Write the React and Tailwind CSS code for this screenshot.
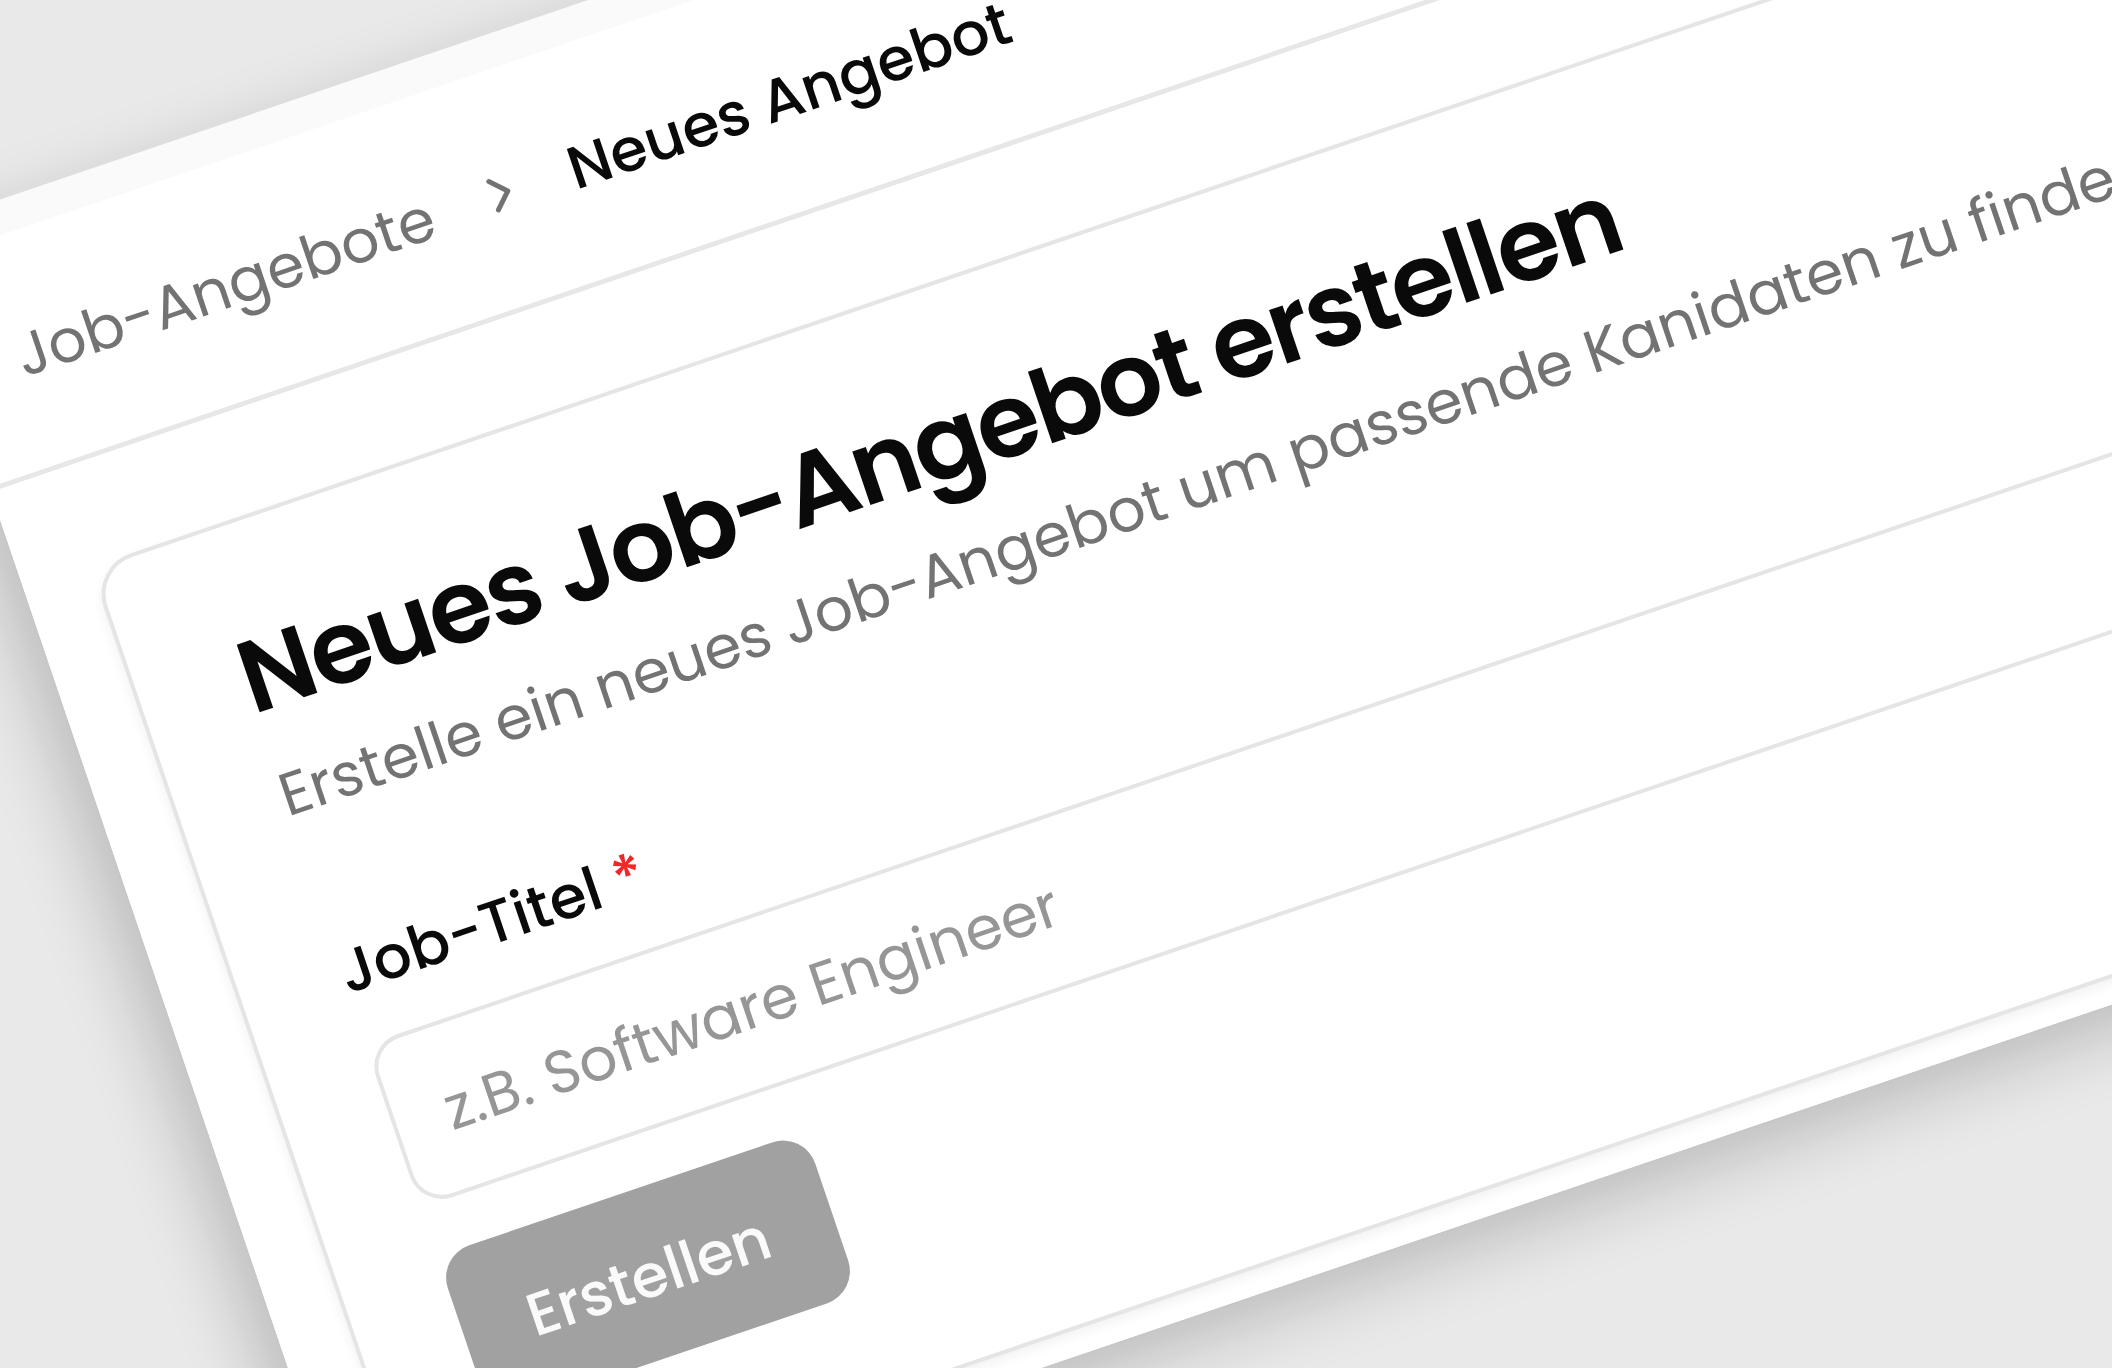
import { useState } from 'react';
import { ChevronRight } from 'lucide-react';

const Breadcrumb = () => {
  return (
    <header className="flex items-center h-60 border-b-5 border-[#e7e7e7] bg-white pt-1.5 pl-[69px]">
      <nav aria-label="Breadcrumb">
        <ol className="flex items-center gap-[42px] text-[60px] leading-[84px] whitespace-nowrap">
          <li>
            <a href="#angebote" className="text-[#737373]">Job-Angebote</a>
          </li>
          <li aria-hidden="true">
            <ChevronRight className="size-15 text-[#737373]" strokeWidth={2} />
          </li>
          <li>
            <span aria-current="page" className="font-medium text-[#0a0a0a]">Neues Angebot</span>
          </li>
        </ol>
      </nav>
    </header>
  );
};

const JobForm = () => {
  const [title, setTitle] = useState('');

  const handleSubmit = (e) => {
    e.preventDefault();
    setTitle('');
  };

  return (
    <form onSubmit={handleSubmit} className="flex flex-col items-start">
      <label htmlFor="jobTitle" className="text-[60px] leading-[60px] font-medium text-[#0a0a0a]">
        Job-Titel <span className="text-[#ef2929]">*</span>
      </label>
      <input
        id="jobTitle"
        type="text"
        value={title}
        onChange={(e) => setTitle(e.target.value)}
        placeholder="z.B. Software Engineer"
        className="mt-[45px] h-43 w-full rounded-[34px] border-4 border-[#e5e5e5] bg-white px-[51px] pt-1 text-[60px] text-[#0a0a0a] placeholder:text-[#969696]"
      />
      <button
        type="submit"
        disabled={!title}
        className="mt-[51px] h-[170px] rounded-[34px] bg-[#171717] px-[67px] pt-1 text-[60px] font-medium text-[#fafafa] disabled:bg-[#a1a1a1]"
      >
        Erstellen
      </button>
    </form>
  );
};

const App = () => {
  return (
    <div className="h-screen overflow-hidden bg-[#e9e9e9] font-['Poppins','Inter',sans-serif]">
      {/* Tilted window */}
      <div className="origin-top-left rotate-[-18.75deg] pt-[189px]">
        <div className="-ml-[167px] w-[120vw] bg-[#fafafa] pt-[34px] shadow-[-22px_22px_70px_rgba(0,0,0,0.2)]">
          <Breadcrumb />

          <main className="bg-white pt-[103px] pb-[25px] pl-[70px]">
            <section className="rounded-[43px] border-4 border-[#e5e5e5] bg-white px-[103px] py-[101px] shadow-[-2px_5px_12px_rgba(0,0,0,0.05)]">
              <h1 className="text-[102px] leading-[104px] font-semibold tracking-tight text-[#0a0a0a]">
                Neues Job-Angebot erstellen
              </h1>
              <p className="mt-7 mb-[115px] text-[60px] leading-[84px] whitespace-nowrap text-[#737373]">
                Erstelle ein neues Job-Angebot um passende Kanidaten zu finden.
              </p>
              <JobForm />
            </section>
          </main>
        </div>
      </div>
    </div>
  );
};

export default App;
